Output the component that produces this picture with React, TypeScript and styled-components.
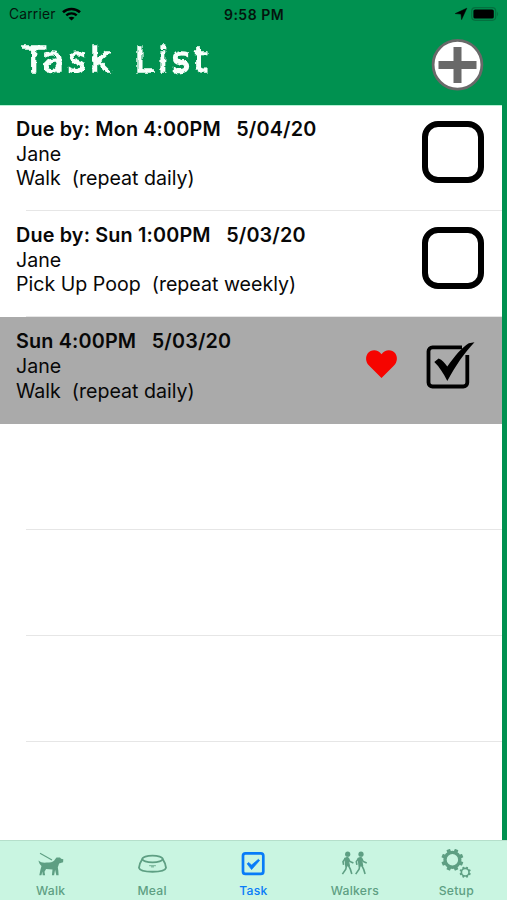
import React from "react";
import styled, { createGlobalStyle } from "styled-components";

const GlobalStyle = createGlobalStyle`
  * { box-sizing: border-box; }
  html, body { margin: 0; padding: 0; background: #009150; }
  body { font-family: Inter, "Liberation Sans", sans-serif; color: #080808; }
  svg { display: block; overflow: visible; }
`;

const Screen = styled.div`
  display: flex;
  flex-direction: column;
  width: 507px;
  height: 900px;
  overflow: hidden;
  background: #009150;
`;

const StatusBar = styled.div`
  display: grid;
  grid-template-columns: 1fr auto 1fr;
  align-items: center;
  height: 27px;
  flex: none;
  padding: 1px 8px 0 9px;
  font-size: 14px;
  color: #04150d;
`;

const Carrier = styled.div`
  display: flex;
  align-items: center;
  gap: 6px;
  font-size: 13.8px;
  letter-spacing: 0.2px;
`;

const Clock = styled.div`
  font-weight: 600;
  font-size: 14px;
  letter-spacing: 0.5px;
`;

const StatusIcons = styled.div`
  display: flex;
  justify-content: flex-end;
  align-items: center;
  gap: 4px;
`;

const Header = styled.header`
  display: flex;
  align-items: flex-start;
  justify-content: space-between;
  height: 78px;
  flex: none;
  padding: 11px 23px 0 23px;
`;

const Title = styled.h1`
  margin: -1px 0 0;
  font-family: "DejaVu Sans", sans-serif;
  font-weight: 400;
  font-size: 35px;
  line-height: 46px;
  letter-spacing: 3.9px;
  word-spacing: 5.5px;
  white-space: nowrap;
  color: #f8fffb;
  -webkit-text-stroke: 1.7px #f8fffb;
  filter: url(#chalk);
`;

const IconButton = styled.button`
  padding: 0;
  border: 0;
  background: none;
`;

const List = styled.main`
  display: flex;
  flex-direction: column;
  width: 502px;
  height: 735px;
  flex: none;
  overflow: hidden;
  background: #fff;
`;

const Row = styled.section<{ $done?: boolean }>`
  display: flex;
  height: 106.2px;
  flex: none;
  padding: 12px 0 0 16px;
  background: ${(p) => (p.$done ? "#aaa" : `linear-gradient(#e6e6e6, #e6e6e6) 26px 100% / 480px 1px no-repeat`)};

  &:first-child {
    box-shadow: inset 0 1px #b5f2d5;
  }
`;

const Details = styled.div`
  width: 345px;
  white-space: pre;
  font-size: 19.6px;
  line-height: 24.6px;
`;

const Due = styled.div`
  font-weight: 600;
  font-size: 19.8px;
  letter-spacing: 0.16px;
`;

const Marks = styled.div`
  display: flex;
  flex: 1;
`;

const HeartSlot = styled.div`
  width: 61px;
  padding: 21px 0 0 5px;
`;

const CheckSlot = styled.div`
  padding-top: 4px;
`;

const EmptyBox = styled.div`
  width: 62px;
  height: 62px;
  border: 6px solid #000;
  border-radius: 16px;
`;

const TabBar = styled.nav`
  display: grid;
  grid-template-columns: repeat(5, 1fr);
  height: 60px;
  flex: none;
  background: #c9f5e1;
  border-top: 1px solid #b5dfcb;
`;

const Tab = styled.a<{ $active?: boolean }>`
  display: flex;
  flex-direction: column;
  align-items: center;
  padding-top: 7px;
  color: ${(p) => (p.$active ? "#087cf8" : "#5e9f83")};
`;

const TabLabel = styled.span`
  margin-top: 3px;
  font-size: 12.2px;
  line-height: 16px;
  font-weight: 500;
  letter-spacing: 0.25px;
`;

const ChalkFilter = () => (
  <svg width="0" height="0" style={{ position: "absolute" }}>
    <filter id="chalk" x="-5%" y="-5%" width="110%" height="110%">
      <feTurbulence type="fractalNoise" baseFrequency="0.2" numOctaves="2" seed="4" result="n" />
      <feDisplacementMap in="SourceGraphic" in2="n" scale="4" xChannelSelector="R" yChannelSelector="G" />
    </filter>
  </svg>
);

const Wifi = () => (
  <svg width="19" height="14" viewBox="0 0 19 14" fill="none" stroke="#000">
    <path d="M1 5.3C5.7.8 13.3.8 18 5.3" strokeWidth="2.6" />
    <path d="M4.3 8.4c2.9-2.7 7.5-2.7 10.4 0" strokeWidth="2.4" />
    <path d="M9.5 13.6 6.5 10.8c1.7-1.5 4.3-1.5 6 0z" fill="#000" stroke="none" />
  </svg>
);

const Location = () => (
  <svg width="12" height="12" viewBox="0 0 12 12">
    <path d="M11.8.2 6.6 11.6 6 6.1.2 5.6z" fill="#000" stroke="#000" strokeWidth=".5" />
  </svg>
);

const Battery = () => (
  <svg width="28" height="14" viewBox="0 0 28 14">
    <rect x=".7" y=".7" width="24" height="12.6" rx="3.5" fill="none" stroke="#04703f" strokeWidth="1.2" />
    <rect x="2.4" y="2.4" width="20.4" height="9.2" rx="1.7" fill="#000" />
    <path d="M26.1 4.5q2 2.5 0 5z" fill="#04703f" />
  </svg>
);

const AddIcon = () => (
  <svg width="53" height="53" viewBox="0 0 53 53">
    <circle cx="26.5" cy="26.8" r="24.4" fill="#fff" stroke="#696969" strokeWidth="2.8" />
    <path d="M26.5 9v36M7.5 27h38" stroke="#696969" strokeWidth="8" />
  </svg>
);

const Heart = () => (
  <svg width="31" height="28" viewBox="0 0 31 28">
    <path d="M15.5 28 3 15.5C-.4 12-.8 6.7 1.8 3.2 5-1 11.9-1.1 15.5 4.2 19.1-1.1 26-1 29.2 3.2c2.6 3.5 2.2 8.8-1.2 12.3z" fill="#f60400" />
  </svg>
);

const CheckedBox = () => (
  <svg width="56" height="62" viewBox="0 0 56 62">
    <path d="M40 14.3H10.5a4 4 0 0 0-4 4v31.2a4 4 0 0 0 4 4h30.8a4 4 0 0 0 4-4V22" fill="none" stroke="#000" strokeWidth="3.8" />
    <path d="M52.5 9.3C42 20.5 34 32 25.3 48 21.5 40.5 17.7 34.2 12.3 29l4.3-3.6c3.6 1.5 6.2 4.3 8.7 8.2C32.5 23 40 14.6 46.8 10.2z" fill="#000" />
  </svg>
);

const WalkIcon = () => (
  <svg width="28" height="32" viewBox="0 0 28 32" fill="currentColor">
    <path d="M3 5.2 15 12" fill="none" stroke="currentColor" strokeWidth="1.1" />
    <path d="M1.5 12.6c3 3 6.5 2 10.5 2 3.5 0 5-1.2 6.3-3.5l1.2-1.5 3.5-.2 1.1 1.4 2.2.5-.2 3-4 1.1-1.3 4.2.5 3 .3 4.6h-2.3l-1.2-5.4-1 5.4h-2.2l.6-5.7-6.4-.6-1.6 2.8.6 3.5H5.7l-.3-3.6-1 3.6H2.3l1.2-5.8 1-3.4c-1.7-1.4-2.7-3.1-3-5.4z" />
  </svg>
);

const MealIcon = () => (
  <svg width="29" height="32" viewBox="0 0 30 32" fill="none" stroke="currentColor" strokeWidth="1.9">
    <ellipse cx="15" cy="10.8" rx="10.5" ry="3.5" />
    <path d="M4.5 10.8C3 13 1.2 17.8 1 20c1.2 5.3 26.8 5.3 28 0-.2-2.2-2-7-3.5-9.2" />
    <path d="M11.5 17.6h7M13.5 19h3" strokeWidth="1.2" opacity=".65" />
  </svg>
);

const TaskIcon = () => (
  <svg width="24" height="32" viewBox="0 0 24 32" fill="none" stroke="currentColor">
    <rect x="2" y="5.3" width="20.3" height="20.6" rx="2.5" strokeWidth="2.7" />
    <path d="m6.1 15.8 1.5-1.3 3 2.5 6.8-5.7 1.2 1.1-8 9.2z" fill="currentColor" strokeWidth=".7" />
  </svg>
);

const Person = ({ x }: { x: number }) => (
  <g transform={`translate(${x} -0.6)`} stroke="currentColor" fill="none">
    <circle cx="6.5" cy="6.8" r="2.6" fill="currentColor" stroke="none" />
    <path d="M3.7 10.9 6.6 9.9l1.5 8.2-3.5.5z" fill="currentColor" strokeWidth="1.2" />
    <path d="m7 10.7 1.7 3.4 3.5 1.6M4.2 10.8l-2.4 3.4.6 3.2M5.4 17.5l-.8 4.2-3.4 5M7 17.5l2.2 4.5 1.4 4.7" strokeWidth="1.6" />
  </g>
);

const WalkersIcon = () => (
  <svg width="28" height="32" viewBox="0 0 28 32">
    <Person x={0.2} />
    <Person x={13.5} />
  </svg>
);

const Gear = ({ cx, cy, r, teeth, stroke }: { cx: number; cy: number; r: number; teeth: number; stroke: number }) => (
  <g transform={`translate(${cx} ${cy})`}>
    <circle r={r} fill="none" stroke="currentColor" strokeWidth={stroke} />
    {Array.from({ length: teeth }, (_, i) => (
      <rect
        key={i}
        x={-r * 0.26}
        y={-r * 1.5}
        width={r * 0.52}
        height={r * 0.5}
        rx={r * 0.08}
        fill="currentColor"
        transform={`rotate(${((i + 0.5) * 360) / teeth})`}
      />
    ))}
  </g>
);

const SetupIcon = () => (
  <svg width="31" height="32" viewBox="0 0 31 32">
    <Gear cx={11.4} cy={11.8} r={7.4} teeth={8} stroke={3.4} />
    <Gear cx={24.2} cy={24.2} r={3.8} teeth={8} stroke={1.6} />
  </svg>
);

const tasks = [
  { due: "Due by: Mon 4:00PM   5/04/20", pet: "Jane", action: "Walk  (repeat daily)", done: false },
  { due: "Due by: Sun 1:00PM   5/03/20", pet: "Jane", action: "Pick Up Poop  (repeat weekly)", done: false },
  { due: "Sun 4:00PM   5/03/20", pet: "Jane", action: "Walk  (repeat daily)", done: true },
];

const tabs = [
  { label: "Walk", Icon: WalkIcon },
  { label: "Meal", Icon: MealIcon },
  { label: "Task", Icon: TaskIcon, active: true },
  { label: "Walkers", Icon: WalkersIcon },
  { label: "Setup", Icon: SetupIcon },
];

export default function App() {
  return (
    <>
      <GlobalStyle />
      <Screen>
        <ChalkFilter />
        <StatusBar>
          <Carrier>Carrier <Wifi /></Carrier>
          <Clock>9:58 PM</Clock>
          <StatusIcons><Location /><Battery /></StatusIcons>
        </StatusBar>
        <Header>
          <Title>Task List</Title>
          <IconButton aria-label="Add task"><AddIcon /></IconButton>
        </Header>
        <List>
          {tasks.map((t) => (
            <Row key={t.due} $done={t.done}>
              <Details>
                <Due>{t.due}</Due>
                <div>{t.pet}</div>
                <div>{t.action}</div>
              </Details>
              <Marks>
                <HeartSlot>{t.done && <Heart />}</HeartSlot>
                <CheckSlot>{t.done ? <CheckedBox /> : <EmptyBox />}</CheckSlot>
              </Marks>
            </Row>
          ))}
          <Row /><Row /><Row /><Row />
        </List>
        <TabBar>
          {tabs.map(({ label, Icon, active }) => (
            <Tab key={label} $active={active}>
              <Icon />
              <TabLabel>{label}</TabLabel>
            </Tab>
          ))}
        </TabBar>
      </Screen>
    </>
  );
}
